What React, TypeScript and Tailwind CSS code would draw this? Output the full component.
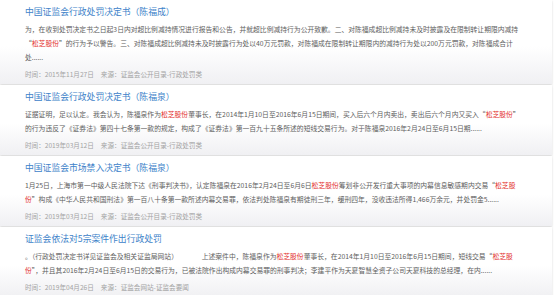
type Part = string | { red: string }

type Item = {
  title: string
  lines: Part[][]
  time: string
  source: string
}

const items: Item[] = [
  {
    title: '中国证监会行政处罚决定书（陈福成）',
    lines: [
      ['为，在收到处罚决定书之日起3日内对超比例减持情况进行报告和公告，并就超比例减持行为公开致歉。二、对陈福成超比例减持未及时披露及在限制转让期限内减持'],
      ['“', { red: '松芝股份' }, '”的行为予以警告。三、对陈福成超比例减持未及时披露行为处以40万元罚款，对陈福成在限制转让期限内的减持行为处以200万元罚款，对陈福成合计'],
      ['处......'],
    ],
    time: '2015年11月27日',
    source: '证监会公开目录-行政处罚类',
  },
  {
    title: '中国证监会行政处罚决定书（陈福泉）',
    lines: [
      ['证据证明，足以认定。我会认为，陈福泉作为', { red: '松芝股份' }, '董事长，在2014年1月10日至2016年6月15日期间，买入后六个月内卖出，卖出后六个月内又买入“', { red: '松芝股份' }, '”'],
      ['的行为违反了《证券法》第四十七条第一款的规定，构成了《证券法》第一百九十五条所述的短线交易行为。对于陈福泉2016年2月24日至6月15日期......'],
    ],
    time: '2019年03月12日',
    source: '证监会公开目录-行政处罚类',
  },
  {
    title: '中国证监会市场禁入决定书（陈福泉）',
    lines: [
      ['1月25日，上海市第一中级人民法院下达《刑事判决书》，认定陈福泉在2016年2月24日至6月6日', { red: '松芝股份' }, '筹划非公开发行重大事项的内幕信息敏感期内交易“', { red: '松芝股' }],
      [{ red: '份' }, '”构成《中华人民共和国刑法》第一百八十条第一款所述内幕交易罪，依法判处陈福泉有期徒刑三年，缓刑四年，没收违法所得1,466万余元，并处罚金5......'],
    ],
    time: '2019年03月12日',
    source: '证监会公开目录-行政处罚类',
  },
  {
    title: '证监会依法对5宗案件作出行政处罚',
    lines: [
      ['。（行政处罚决定书详见证监会及相关证监局网站）　　　　上述案件中，陈福泉作为', { red: '松芝股份' }, '董事长，在2014年1月10日至2016年6月15日期间，短线交易“', { red: '松芝股' }],
      [{ red: '份' }, '”，并且其2016年2月24日至6月15日的交易行为，已被法院作出构成内幕交易罪的刑事判决；李建平作为天夏智慧全资子公司天夏科技的总经理，在内......'],
    ],
    time: '2019年04月26日',
    source: '证监会网站-证监会要闻',
  },
]

function Card({ item }: { item: Item }) {
  return (
    <div className="bg-gradient-to-b from-white from-55% to-[#f0f0f3] pl-[25px] pt-[4px] pb-[3px] shadow-[0_1px_2px_rgba(0,0,0,0.16)]">
      <div className="text-[8.8px] leading-[16px] text-[#3d82c9] whitespace-nowrap">{item.title}</div>
      <div className="mt-[2px] text-[6.8px] leading-[14px] text-[#5e5e5e]">
        {item.lines.map((line, i) => (
          <div key={i} className="whitespace-pre">
            {line.map((p, j) =>
              typeof p === 'string' ? (
                <span key={j}>{p}</span>
              ) : (
                <span key={j} className="text-[#e3302d]">
                  {p.red}
                </span>
              )
            )}
          </div>
        ))}
      </div>
      <div className="mt-[3px] flex gap-[7px] text-[6.6px] leading-[14px] text-[#a3a3a3] whitespace-nowrap">
        <span>时间：{item.time}</span>
        <span>来源：{item.source}</span>
      </div>
    </div>
  )
}

export default function App() {
  return (
    <div className="h-[295px] w-[554px] overflow-hidden bg-white pr-[2px] font-['Noto_Sans_CJK_SC','Liberation_Sans',sans-serif]">
      <div className="flex flex-col gap-px">
        {items.map((item, i) => (
          <Card key={i} item={item} />
        ))}
      </div>
    </div>
  )
}
